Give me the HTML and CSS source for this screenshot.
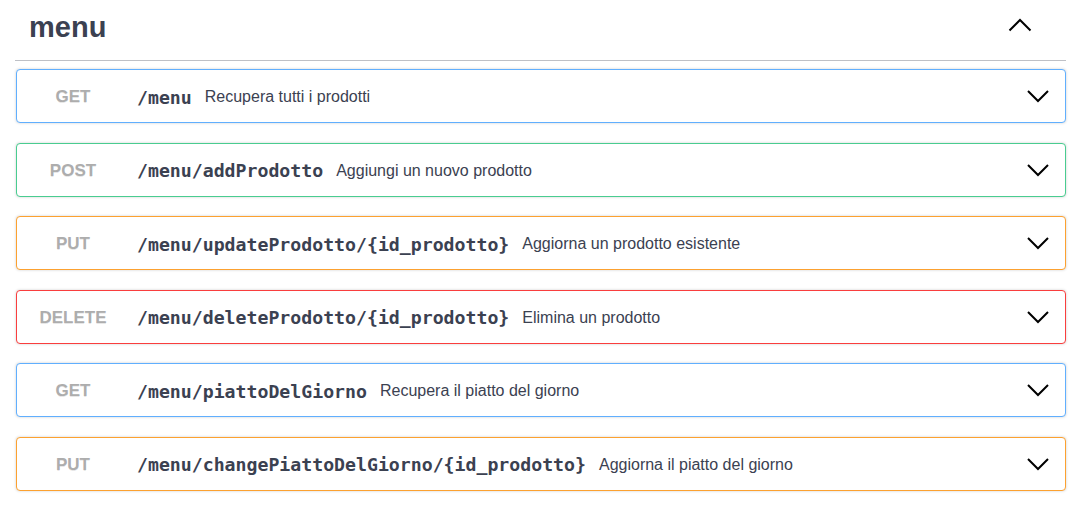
FILE: index.html
```html
<!DOCTYPE html>
<html lang="it">
<head>
<meta charset="utf-8">
<title>menu</title>
<link rel="stylesheet" href="styles.css">
</head>
<body>
<section class="tag">
  <div class="tag-head">
    <h3 class="tag-title">menu</h3>
    <svg class="chev-up" width="24" height="14" viewBox="0 0 24 14"><polyline points="1.5,12.5 12,2 22.5,12.5" fill="none" stroke="#000" stroke-width="2"/></svg>
  </div>
  <div class="ops">
    <div class="op op-get">
      <span class="method">GET</span>
      <span class="path">/menu</span>
      <span class="desc">Recupera tutti i prodotti</span>
      <svg class="chev" width="22" height="14" viewBox="0 0 22 14"><polyline points="1,2 11,12 21,2" fill="none" stroke="#000" stroke-width="2"/></svg>
    </div>
    <div class="op op-post">
      <span class="method">POST</span>
      <span class="path">/menu/addProdotto</span>
      <span class="desc">Aggiungi un nuovo prodotto</span>
      <svg class="chev" width="22" height="14" viewBox="0 0 22 14"><polyline points="1,2 11,12 21,2" fill="none" stroke="#000" stroke-width="2"/></svg>
    </div>
    <div class="op op-put">
      <span class="method">PUT</span>
      <span class="path">/menu/updateProdotto/{id_prodotto}</span>
      <span class="desc">Aggiorna un prodotto esistente</span>
      <svg class="chev" width="22" height="14" viewBox="0 0 22 14"><polyline points="1,2 11,12 21,2" fill="none" stroke="#000" stroke-width="2"/></svg>
    </div>
    <div class="op op-delete">
      <span class="method">DELETE</span>
      <span class="path">/menu/deleteProdotto/{id_prodotto}</span>
      <span class="desc">Elimina un prodotto</span>
      <svg class="chev" width="22" height="14" viewBox="0 0 22 14"><polyline points="1,2 11,12 21,2" fill="none" stroke="#000" stroke-width="2"/></svg>
    </div>
    <div class="op op-get">
      <span class="method">GET</span>
      <span class="path">/menu/piattoDelGiorno</span>
      <span class="desc">Recupera il piatto del giorno</span>
      <svg class="chev" width="22" height="14" viewBox="0 0 22 14"><polyline points="1,2 11,12 21,2" fill="none" stroke="#000" stroke-width="2"/></svg>
    </div>
    <div class="op op-put">
      <span class="method">PUT</span>
      <span class="path">/menu/changePiattoDelGiorno/{id_prodotto}</span>
      <span class="desc">Aggiorna il piatto del giorno</span>
      <svg class="chev" width="22" height="14" viewBox="0 0 22 14"><polyline points="1,2 11,12 21,2" fill="none" stroke="#000" stroke-width="2"/></svg>
    </div>
  </div>
</section>
</body>
</html>
```
FILE: styles.css
```css
html, body {
  margin: 0;
  padding: 0;
  background: #fff;
}
body {
  font-family: "Liberation Sans", Arial, sans-serif;
  color: #3b4151;
}
.tag {
  padding: 0 15px;
}
.tag-head {
  display: flex;
  align-items: center;
  justify-content: space-between;
  height: 60px;
  padding: 0 34px 0 14px;
  border-bottom: 1px solid rgba(59, 65, 81, 0.33);
}
.tag-title {
  margin: 0;
  font-size: 29px;
  font-weight: bold;
  color: #3b4151;
  position: relative;
  top: -3px;
}
.chev-up {
  display: block;
  position: relative;
  top: -5px;
}
.ops {
  padding-top: 8px;
}
.op {
  display: flex;
  align-items: center;
  height: 54px;
  box-sizing: border-box;
  padding-top: 2px;
  margin: 0 0 19.6px 1px;
  border: 1px solid #61affe;
  border-radius: 4px;
  background: #fff;
  box-shadow: 0 0 3px rgba(0, 0, 0, 0.19);
}
.op-get { border-color: #61affe; }
.op-post { border-color: #49cc90; }
.op-put { border-color: #fca130; }
.op-delete { border-color: #f93e3e; }
.method {
  flex: none;
  width: 80px;
  margin-left: 16px;
  text-align: center;
  font-size: 17px;
  font-weight: bold;
  color: #adadad;
  text-shadow: 0 1px 0 rgba(0, 0, 0, 0.1);
}
.path {
  flex: none;
  padding-left: 24px;
  padding-right: 13px;
  font-family: "DejaVu Sans Mono", monospace;
  font-size: 18.2px;
  font-weight: bold;
  color: #3b4151;
}
.desc {
  flex: 1;
  font-size: 16px;
  color: #3b4151;
}
.chev {
  display: block;
  flex: none;
  margin-right: 16px;
  position: relative;
  top: -1px;
}
```
